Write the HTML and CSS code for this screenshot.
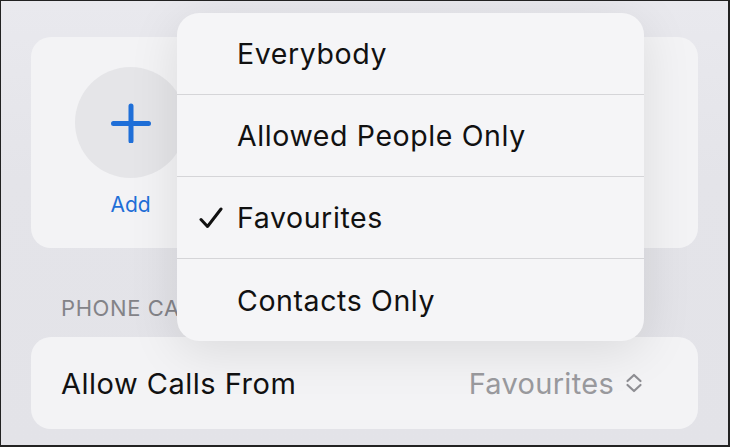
FILE: index.html
```html
<!DOCTYPE html>
<html>
<head>
<meta charset="utf-8">
<link rel="stylesheet" href="styles.css">
</head>
<body>
<div class="frame">
  <section class="card card-add">
    <div class="add-item">
      <div class="add-circle">
        <svg width="40" height="40" viewBox="0 0 40 40"><path d="M20 3V38M2.5 20.5H37.5" stroke="#1f6fd8" stroke-width="5" stroke-linecap="round" fill="none"/></svg>
      </div>
      <div class="add-label">Add</div>
    </div>
  </section>
  <div class="section-label">PHONE CALLS</div>
  <section class="card card-row">
    <span class="row-title">Allow Calls From</span>
    <span class="row-value">Favourites
      <svg class="updown" width="20" height="22" viewBox="0 0 20 22"><path d="M3.5 9L10 3L16.5 9M3.5 13L10 19L16.5 13" stroke="#8e8e93" stroke-width="2.2" stroke-linecap="round" stroke-linejoin="round" fill="none"/></svg>
    </span>
  </section>
  <ul class="menu">
    <li class="menu-item"><span class="check"></span>Everybody</li>
    <li class="menu-item"><span class="check"></span>Allowed People Only</li>
    <li class="menu-item"><span class="check"><svg width="24" height="22" viewBox="0 0 24 22"><path d="M2 12.5L8.5 19.5L22 2" stroke="#111" stroke-width="3" stroke-linecap="round" stroke-linejoin="round" fill="none"/></svg></span>Favourites</li>
    <li class="menu-item"><span class="check"></span>Contacts Only</li>
  </ul>
</div>
</body>
</html>
```
FILE: styles.css
```css
* { box-sizing: border-box; }
html, body { margin: 0; padding: 0; }
body {
  font-family: Inter, "Noto Sans", "Liberation Sans", sans-serif;
  background: #1a1a1a;
}
.frame {
  position: relative;
  width: 730px;
  height: 447px;
  overflow: hidden;
  border-top: 1px solid #222;
  border-left: 1px solid #222;
  border-right: 2px solid #222;
  border-bottom: 2px solid #222;
  background: linear-gradient(180deg, #e9e9ee 0%, #e4e4e9 40%, #e3e3e8 100%);
  padding: 36px 30px 0 30px;
  display: flex;
  flex-direction: column;
}
.card {
  background: #f3f3f5;
  border-radius: 20px;
}
.card-add {
  height: 211px;
  padding: 30px 0 0 44px;
  display: flex;
}
.add-item {
  display: flex;
  flex-direction: column;
  align-items: center;
  width: 111px;
}
.add-circle {
  width: 111px;
  height: 111px;
  border-radius: 50%;
  background: #e5e5e8;
  display: flex;
  align-items: center;
  justify-content: center;
}
.add-label {
  margin-top: 14px;
  color: #1f6fd8;
  font-size: 21px;
  line-height: 26px;
}
.section-label {
  margin-top: 47px;
  padding-left: 30px;
  font-size: 22px;
  line-height: 26px;
  letter-spacing: 0.6px;
  color: #838388;
  white-space: nowrap;
}
.card-row {
  margin-top: 16px;
  height: 92px;
  display: flex;
  align-items: center;
  justify-content: space-between;
  padding: 0 54px 0 30px;
}
.row-title {
  font-size: 29px;
  letter-spacing: 0.5px;
  color: #111;
}
.row-value {
  font-size: 29px;
  letter-spacing: 0.3px;
  color: #9a9a9e;
  display: flex;
  align-items: center;
  gap: 10px;
}
.menu {
  position: absolute;
  left: 176px;
  top: 12px;
  width: 467px;
  margin: 0;
  padding: 0;
  list-style: none;
  background: #f5f5f7;
  border-radius: 22px;
  box-shadow: 0 10px 50px rgba(0, 0, 0, 0.10);
  overflow: hidden;
}
.menu-item {
  height: 82px;
  display: flex;
  align-items: center;
  font-size: 28.5px;
  letter-spacing: 0.6px;
  color: #111;
  border-bottom: 1px solid #d5d5d8;
}
.menu-item:last-child { border-bottom: none; }
.check {
  width: 60px;
  display: flex;
  justify-content: flex-end;
  padding-right: 14px;
}
```
